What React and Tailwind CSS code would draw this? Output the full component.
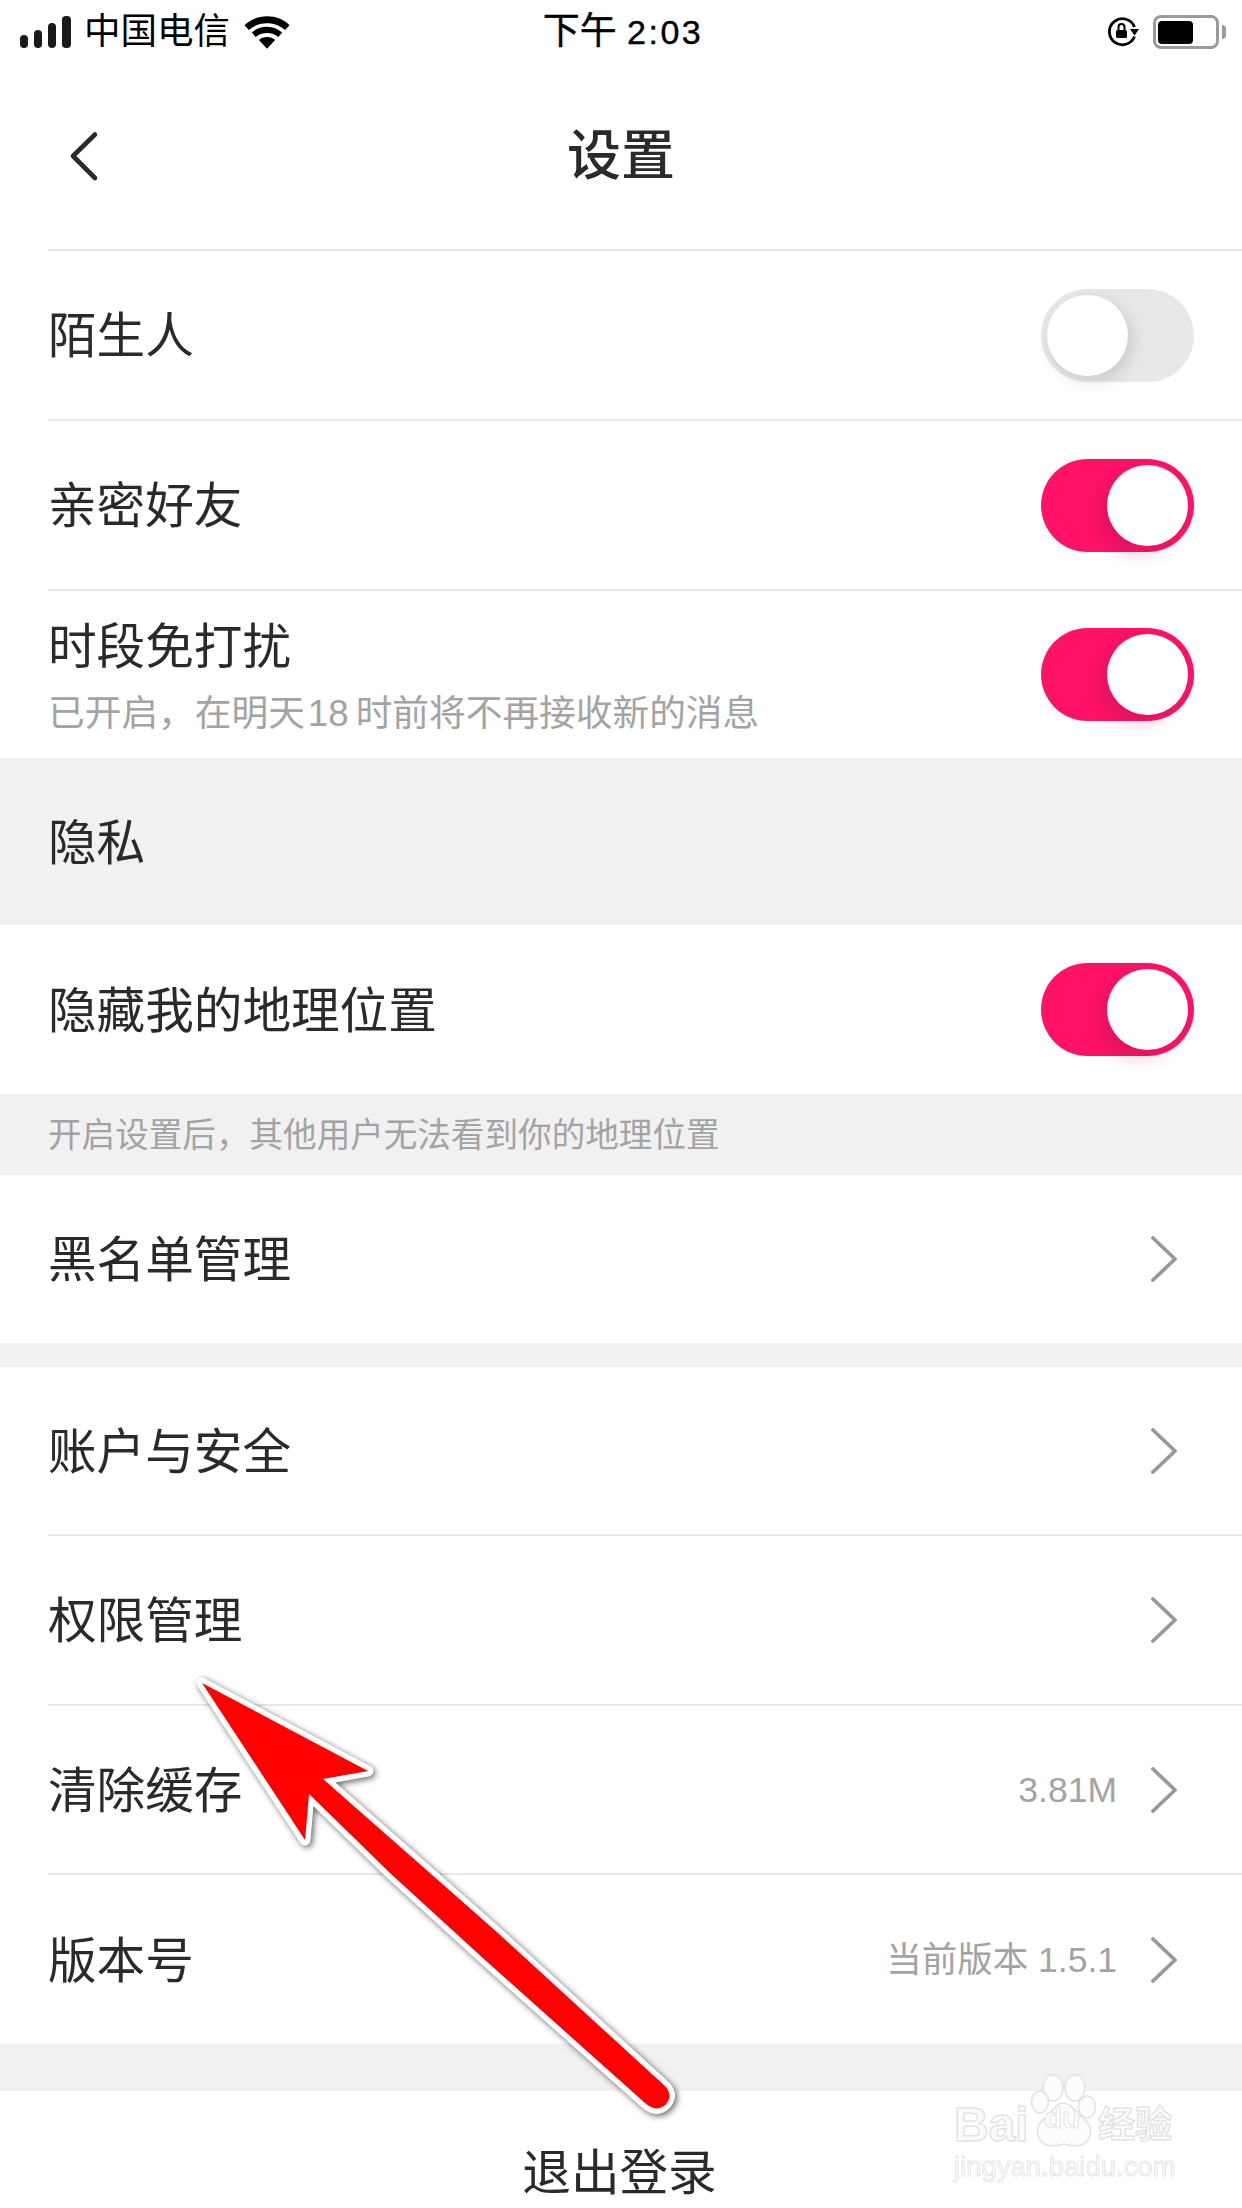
function Toggle({ on }) {
  if (on) {
    return (
      <div className="flex h-[93px] w-[153px] items-center justify-end rounded-full bg-[#ff1267] pr-[6px]">
        <div className="h-[81px] w-[81px] rounded-full bg-white shadow-[-8px_8px_16px_rgba(120,20,70,0.22)]" />
      </div>
    )
  }
  return (
    <div className="flex h-[93px] w-[153px] items-center justify-start rounded-full bg-[#e8e8ea] pl-[6px]">
      <div className="h-[81px] w-[81px] rounded-full bg-white shadow-[4px_5px_16px_rgba(0,0,0,0.14)]" />
    </div>
  )
}

function Chevron() {
  return (
    <svg width="26" height="46" viewBox="0 0 26 46" fill="none" className="shrink-0">
      <path d="M2 2 L24 23 L2 44" stroke="#999999" strokeWidth="3.8" strokeLinecap="round" strokeLinejoin="round" />
    </svg>
  )
}

function Row({ title, height, border = true, children }) {
  return (
    <div className={`pl-[48px] ${height}`}>
      <div className={`flex h-full items-center justify-between ${border ? "border-b-2 border-[#e8e8e8]" : ""}`}>
        <span className="pt-[3px] text-[48.6px] leading-none text-[#2a2a2a]">{title}</span>
        {children}
      </div>
    </div>
  )
}

function ToggleSlot({ on }) {
  return (
    <div className="pr-[48px]">
      <Toggle on={on} />
    </div>
  )
}

function LinkSlot({ value }) {
  return (
    <div className="flex items-center pr-[65px]">
      {value && <span className="mr-[34px] pt-[2px] text-[35.5px] leading-none text-[#a3a3a3]">{value}</span>}
      <Chevron />
    </div>
  )
}

function StatusBar() {
  return (
    <div className="grid h-[62px] grid-cols-[1fr_auto_1fr] items-center pl-[20px] pr-[16px] pt-[2px] text-black">
      <div className="flex items-center">
        <svg width="51" height="32" viewBox="0 0 51 32" fill="#1a1a1a">
          <rect x="0" y="19" width="8" height="13" rx="4" />
          <rect x="14" y="14" width="8" height="18" rx="4" />
          <rect x="28" y="7" width="8" height="25" rx="4" />
          <rect x="42" y="0" width="9" height="32" rx="4" />
        </svg>
        <span className="ml-[13px] text-[36.5px] leading-none">中国电信</span>
        <svg width="46" height="33" viewBox="0 0 47 33" fill="#000" className="ml-[14px]">
          <path d="M23.5 0 C14.5 0 6.5 3.4 0.5 9 L5 14 C10 9.4 16.2 7 23.5 7 C30.8 7 37 9.4 42 14 L46.5 9 C40.5 3.4 32.5 0 23.5 0 Z" />
          <path d="M23.5 10.5 C17.4 10.5 12 12.6 8 16.6 L12 21 C15 18.2 19 17 23.5 17 C28 17 32 18.2 35 21 L39 16.6 C35 12.6 29.6 10.5 23.5 10.5 Z" />
          <path d="M23.5 21 C20.2 21 17.4 22 15.2 24.2 L23.5 33 L31.8 24.2 C29.6 22 26.8 21 23.5 21 Z" />
        </svg>
      </div>
      <span className="text-[37px] leading-[40px] [-webkit-text-stroke:0.4px_#000]">
        下午 <span className="text-[34px] tracking-[2.5px]">2:03</span>
      </span>
      <div className="flex items-center justify-end">
        <svg width="32" height="30" viewBox="0 0 32 30" fill="none" className="mr-[13px]">
          <path d="M26.5 10 A13 13 0 1 0 26.5 19.5" stroke="#000" strokeWidth="2.8" />
          <path d="M22 12 L31 12 L26.5 18.5 Z" fill="#000" />
          <rect x="8" y="13" width="11" height="8" rx="1.5" fill="#000" />
          <path d="M10.5 13 V10 A3 3 0 0 1 16.5 10 V13" stroke="#000" strokeWidth="2" />
        </svg>
        <div className="flex h-[34px] w-[66px] items-center rounded-[8px] border-[3px] border-[#9a9a9a] pl-[2px]">
          <div className="h-[23px] w-[35px] rounded-[4px] bg-black" />
        </div>
        <div className="ml-[3px] h-[14px] w-[4px] rounded-r-full bg-[#9a9a9a]" />
      </div>
    </div>
  )
}

function Watermark() {
  return (
    <div className="absolute left-[954px] top-[2073px] h-[110px] w-[225px] text-[#fbfbfb] blur-[0.4px]">
      <span className="absolute left-0 top-[29px] text-[48px] font-bold leading-[46px] [-webkit-text-stroke:1.5px_#e3e3e3]">Bai</span>
      <svg width="68" height="76" viewBox="0 0 68 76" fill="#fcfcfc" stroke="#e3e3e3" strokeWidth="1.6" className="absolute left-[76px] top-0">
        <ellipse cx="23" cy="15" rx="10" ry="13" />
        <ellipse cx="45" cy="15" rx="10" ry="13" />
        <ellipse cx="10" cy="29" rx="8.5" ry="11" />
        <ellipse cx="57" cy="34" rx="8.5" ry="11" />
        <path d="M33 30 C25 30 22 40 14 46 C3 54 6 73 23 73 C29 73 31 71 34 71 C37 71 39 73 45 73 C62 73 65 54 54 46 C46 40 41 30 33 30 Z" />
      </svg>
      <span className="absolute left-[90px] top-[30px] text-[30px] font-bold leading-[30px] [-webkit-text-stroke:1px_#e3e3e3]">du</span>
      <span className="absolute left-[144px] top-[33px] text-[37px] font-bold leading-[40px] [-webkit-text-stroke:1.5px_#e3e3e3]">经验</span>
      <span className="absolute left-0 top-[78px] whitespace-nowrap text-[27.5px] leading-[32px] [-webkit-text-stroke:1px_#e6e6e6]">jingyan.baidu.com</span>
    </div>
  )
}

function Arrow() {
  const shape =
    "M202 1683 L368 1771 L323 1779 L431 1874 L499 1934 L666 2087 Q674 2097 664 2106 Q655 2112 645 2103 L485 1960 L391 1874 L309 1794 L305 1840 Z"
  return (
    <svg width="1242" height="2208" viewBox="0 0 1242 2208" className="pointer-events-none absolute left-0 top-0 drop-shadow-[2px_2px_3px_rgba(0,0,0,0.6)]">
      <path d={shape} fill="#ff0000" stroke="#ffffff" strokeWidth="11" strokeLinejoin="round" paintOrder="stroke" />
    </svg>
  )
}

export default function App() {
  return (
    <div className="relative h-[2208px] w-[1242px] overflow-hidden bg-white font-['Liberation_Sans','Noto_Sans_CJK_SC',sans-serif]">
      <StatusBar />

      <div className="grid h-[187px] grid-cols-[1fr_auto_1fr] items-center pl-[69px]">
        <svg width="32" height="54" viewBox="0 0 32 54" fill="none">
          <path d="M26 5.5 L4 27 L26 49" stroke="#2a2a2a" strokeWidth="4.6" strokeLinecap="round" strokeLinejoin="round" />
        </svg>
        <span className="pr-[69px] text-[54px] font-medium leading-none text-[#2a2a2a]">设置</span>
      </div>

      <div className="ml-[48px] h-[2px] bg-[#e5e5e5]" />

      <Row title="陌生人" height="h-[170px]">
        <ToggleSlot on={false} />
      </Row>
      <Row title="亲密好友" height="h-[170px]">
        <ToggleSlot on />
      </Row>
      <div className="flex h-[167px] items-center justify-between pl-[48px]">
        <div className="pt-[7px]">
          <div className="text-[48.6px] leading-none text-[#2a2a2a]">时段免打扰</div>
          <div className="mt-[24px] flex text-[36.7px] leading-none text-[#a3a3a3]">
            已开启，在明天<span className="ml-[3px] mr-[7px]">18</span>时前将不再接收新的消息
          </div>
        </div>
        <ToggleSlot on />
      </div>

      <div className="flex h-[167px] items-center bg-[#f1f1f1] pl-[48px] pt-[3px] text-[48.6px] leading-none text-[#2a2a2a]">隐私</div>

      <Row title="隐藏我的地理位置" height="h-[169px]" border={false}>
        <ToggleSlot on />
      </Row>
      <div className="flex h-[81px] items-center bg-[#f1f1f1] pl-[48px] pt-[2px] text-[33.6px] leading-none text-[#a3a3a3]">开启设置后，其他用户无法看到你的地理位置</div>

      <Row title="黑名单管理" height="h-[168px]" border={false}>
        <LinkSlot />
      </Row>
      <div className="h-[24px] bg-[#f1f1f1]" />

      <Row title="账户与安全" height="h-[169px]">
        <LinkSlot />
      </Row>
      <Row title="权限管理" height="h-[170px]">
        <LinkSlot />
      </Row>
      <Row title="清除缓存" height="h-[169px]">
        <LinkSlot value="3.81M" />
      </Row>
      <Row title="版本号" height="h-[169px]" border={false}>
        <LinkSlot value="当前版本 1.5.1" />
      </Row>
      <div className="h-[47px] bg-[#f1f1f1]" />

      <div className="flex h-[164px] items-center justify-center pr-[3px] text-[48.6px] leading-none text-[#2a2a2a]">退出登录</div>

      <Watermark />
      <Arrow />
    </div>
  )
}
